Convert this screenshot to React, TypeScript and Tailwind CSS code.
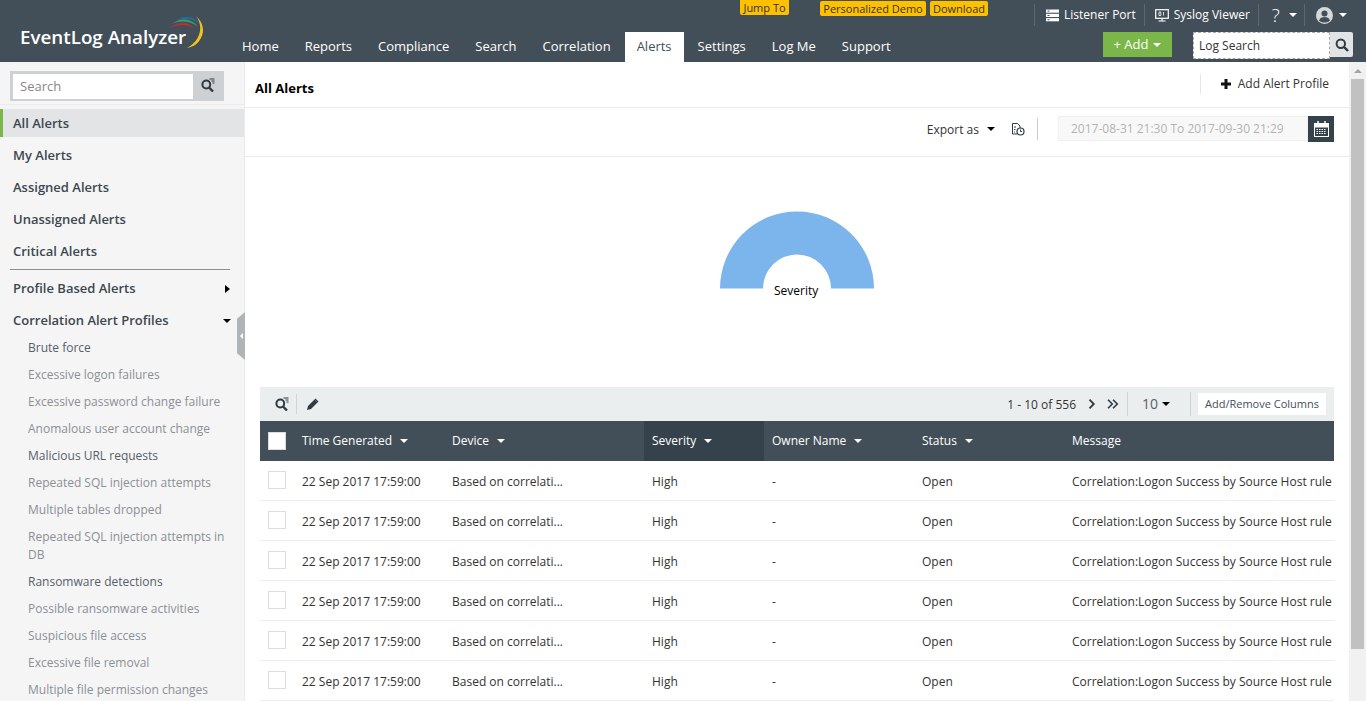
import React from 'react';

const navItems = ['Home', 'Reports', 'Compliance', 'Search', 'Correlation', 'Alerts', 'Settings', 'Log Me', 'Support'];
const topItems = ['All Alerts', 'My Alerts', 'Assigned Alerts', 'Unassigned Alerts', 'Critical Alerts'];
const subItems = [
  { label: 'Brute force', dark: true },
  { label: 'Excessive logon failures' },
  { label: 'Excessive password change failure' },
  { label: 'Anomalous user account change' },
  { label: 'Malicious URL requests', dark: true },
  { label: 'Repeated SQL injection attempts' },
  { label: 'Multiple tables dropped' },
  { label: 'Repeated SQL injection attempts in DB' },
  { label: 'Ransomware detections', dark: true },
  { label: 'Possible ransomware activities' },
  { label: 'Suspicious file access' },
  { label: 'Excessive file removal' },
  { label: 'Multiple file permission changes' },
];
const rows = [0, 1, 2, 3, 4, 5];

const Caret = ({ className = 'border-t-white' }: { className?: string }) => (
  <span className={`inline-block w-0 h-0 border-x-[4px] border-x-transparent border-t-[4px] ${className}`} />
);

const SearchFilterIcon = () => (
  <svg width="14" height="14" viewBox="0 0 14 14" fill="none">
    <circle cx="5.300" cy="6.500" r="3.900" stroke="#2f3a42" strokeWidth="2" />
    <path d="M8 9.500l4 4" stroke="#2f3a42" strokeWidth="2.400" />
    <path d="M8.500 1h5M10.500 3h3M11.500 5h2" stroke="#2f3a42" strokeWidth="1" />
  </svg>
);

const MagnifierIcon = () => (
  <svg width="14" height="14" viewBox="0 0 14 14" fill="none">
    <circle cx="5.800" cy="5.800" r="4.200" stroke="#2f3a42" strokeWidth="2" />
    <path d="M9 9l4 4" stroke="#2f3a42" strokeWidth="2.400" />
  </svg>
);

const Logo = () => (
  <div className="flex items-start w-[229px] shrink-0 pl-[20px] pt-[16px] relative">
    <span className="text-white text-[18.8px] font-semibold leading-[42px] whitespace-nowrap">EventLog Analyzer</span>
    <svg className="absolute left-[168px] top-[15px]" width="37" height="35" viewBox="0 0 37 35">
      <path d="M7 6C13 1 25 -1 33 10C26 3 15 2 7 6Z" fill="#1f6fb5" />
      <path d="M4 9C11 3 23 2 30 12C23 6 13 5 4 9Z" fill="#3aa655" />
      <path d="M2 13C9 7 20 6 26 13C19 9 10 9 2 13Z" fill="#c8283c" />
      <path d="M28 1C35 7 37 16 33 23C30 29 25 32 19 33C26 29 31 23 32 16C33 10 31 5 28 1Z" fill="#f2c21a" />
    </svg>
  </div>
);

const Header = () => (
  <header className="h-[62px] shrink-0 bg-[#434f58] flex text-white">
    <Logo />
    <div className="flex-1 flex flex-col min-w-0">
      <div className="h-[32px] flex items-start text-[11px] text-[#333]">
        <span className="ml-[511px] w-[49px] h-[15px] leading-[15px] rounded-b-[2px] bg-[#ffc000] text-center">Jump To</span>
        <span className="ml-[31px] mt-[1px] w-[106px] h-[15px] leading-[15px] rounded-[2px] bg-[#ffc000] text-center">Personalized Demo</span>
        <span className="ml-[4px] mt-[1px] w-[58px] h-[15px] leading-[15px] rounded-[2px] bg-[#ffc000] text-center">Download</span>
        <div className="ml-[46px] h-[22px] mt-[4px] flex items-center text-white text-[12px]">
          <div className="h-[22px] pl-[11px] pr-[8px] border-l border-[#5d6870] flex items-center gap-[5px]">
            <svg width="13" height="13" viewBox="0 0 13 13" fill="#fff">
              <rect x="0" y="0.500" width="13" height="3.200" />
              <rect x="0" y="4.800" width="13" height="3.200" />
              <rect x="0" y="9.100" width="13" height="3.200" />
              <path d="M1.500 1.600h2v1h-2zM1.500 5.900h2v1h-2zM1.500 10.200h2v1h-2z" fill="#434f58" />
            </svg>
            <span>Listener Port</span>
          </div>
          <div className="h-[22px] pl-[10px] pr-[8px] border-l border-[#5d6870] flex items-center gap-[5px]">
            <svg width="14" height="13" viewBox="0 0 14 13" fill="none">
              <rect x="0.700" y="0.700" width="12.600" height="8.600" stroke="#fff" strokeWidth="1.200" />
              <path d="M7 9.500v2M3.500 12h7" stroke="#fff" strokeWidth="1.200" />
              <path d="M4 3h1.800v3.500H4zM8.500 3v3.500" stroke="#fff" strokeWidth="0.800" />
            </svg>
            <span>Syslog Viewer</span>
          </div>
          <div className="h-[22px] pl-[13px] pr-[7px] border-l border-[#5d6870] flex items-center gap-[8px]">
            <span className="text-[19px] font-light leading-none w-[9px]">?</span>
            <Caret />
          </div>
          <div className="h-[22px] pl-[11px] border-l border-[#5d6870] flex items-center gap-[6px]">
            <svg width="17" height="17" viewBox="0 0 17 17">
              <circle cx="8.500" cy="8.500" r="8.500" fill="#d5d8da" />
              <circle cx="8.500" cy="6.500" r="3" fill="#434f58" />
              <path d="M3 13.500C4 10.500 6 10 8.500 10S13 10.500 14 13.500C12.500 15 10.500 15.500 8.500 15.500S4.500 15 3 13.500Z" fill="#434f58" />
            </svg>
            <Caret />
          </div>
        </div>
      </div>
      <div className="flex-1 flex items-end relative">
        <nav className="flex text-[13px] leading-[28px] h-[30px]">
          {navItems.map((item) =>
            item === 'Alerts' ? (
              <span key={item} className="mx-[1px] px-[12px] bg-white text-[#434f58]">{item}</span>
            ) : (
              <span key={item} className="px-[13px]">{item}</span>
            ),
          )}
        </nav>
        <div className="ml-auto mr-[13px] mb-[3px] flex items-start">
          <span className="w-[69px] h-[25px] bg-[#7ab648] flex items-center justify-center gap-[5px] text-[13px]">
            + Add <Caret />
          </span>
          <span className="ml-[21px] w-[137px] h-[27px] bg-white border border-dashed border-[#aaa] text-[12px] leading-[25px] pl-[5px] text-[#333]">Log Search</span>
          <span className="w-[23px] h-[25px] bg-[#e2e3e4] rounded-r-[2px] flex items-center justify-center">
            <MagnifierIcon />
          </span>
        </div>
      </div>
    </div>
  </header>
);

const Sidebar = () => (
  <aside className="w-[245px] shrink-0 bg-[#f5f5f5] border-r border-[#e8ecee] relative overflow-visible">
    <div className="h-[43px] mx-0 border-b border-[#e8ecee] pt-[9px] pl-[10px]">
      <div className="w-[214px] h-[30px] bg-[#cdd1d4] flex items-center pl-[3px]">
        <span className="w-[180px] h-[25px] bg-white text-[13px] leading-[25px] pl-[7px] text-[#888]">Search</span>
        <span className="flex-1 flex justify-center -mt-[2px] pr-[2px]"><SearchFilterIcon /></span>
      </div>
    </div>
    <div className="mt-[4px]">
      {topItems.map((item, i) => (
        <div
          key={item}
          className={`h-[28px] mb-[4px] flex items-center text-[13px] font-semibold text-[#3c4750] ${i === 0 ? 'bg-[#e3e4e6] border-l-[3px] border-[#7ab648] pl-[10px]' : 'pl-[13px]'}`}
        >
          <span className="mt-[2px]">{item}</span>
        </div>
      ))}
    </div>
    <div className="mx-[10px] w-[220px] mt-[3px] border-t border-[#8a8f93]" />
    <div className="mt-[5px] h-[28px] mb-[4px] pl-[13px] pr-[14px] flex items-center justify-between text-[13px] font-semibold text-[#3c4750]">
      <span>Profile Based Alerts</span>
      <span className="w-0 h-0 border-y-[4px] border-y-transparent border-l-[5px] border-l-black" />
    </div>
    <div className="h-[28px] pl-[13px] pr-[13px] flex items-center justify-between text-[13px] font-semibold text-[#3c4750]">
      <span>Correlation Alert Profiles</span>
      <Caret className="border-t-black" />
    </div>
    <ul className="pl-[28px] pr-[15px] mt-[4px]">
      {subItems.map((item) => (
        <li key={item.label} className={`text-[12px] leading-[18px] mb-[9px] ${item.dark ? 'text-[#55606a]' : 'text-[#8b9095]'}`}>
          {item.label}
        </li>
      ))}
    </ul>
    <div className="absolute right-[-1px] top-[250px] w-[8px] h-[48px] bg-[#b0b4b7] flex items-center justify-center [clip-path:polygon(0_14%,100%_0,100%_100%,0_86%)]">
      <span className="w-0 h-0 border-y-[3px] border-y-transparent border-r-[3px] border-r-white" />
    </div>
  </aside>
);

const Toolbar = () => (
  <div className="h-[34px] bg-[#ebeeef] flex items-center pl-[15px] pr-[8px] text-[#333]">
    <SearchFilterIcon />
    <span className="ml-[7px] h-[20px] border-l border-[#cfd3d5]" />
    <svg className="ml-[9px]" width="13" height="13" viewBox="0 0 13 13" fill="#2f3a42">
      <path d="M8.500 1.500l3 3L5 11 1 12l1-4z" />
      <path d="M9.500 0.500l3 3-1 1-3-3z" />
    </svg>
    <span className="ml-auto text-[12px] mt-[2px]">1 - 10 of 556</span>
    <svg className="ml-[12px]" width="8" height="10" viewBox="0 0 8 10" fill="none">
      <path d="M1.500 0.700l4.300 4.300-4.300 4.300" stroke="#2f3a42" strokeWidth="1.800" />
    </svg>
    <svg className="ml-[11px]" width="12" height="10" viewBox="0 0 12 10" fill="none">
      <path d="M1 0.700l4.300 4.300-4.300 4.300M6 0.700l4.300 4.300-4.300 4.300" stroke="#2f3a42" strokeWidth="1.600" />
    </svg>
    <span className="ml-[8px] h-[24px] border-l border-[#cfd3d5]" />
    <span className="ml-[14px] w-[14px] text-[14px] text-[#55606a] -mt-[1px]">10</span>
    <Caret className="border-t-black ml-[6px]" />
    <span className="ml-[20px] h-[24px] border-l border-[#cfd3d5]" />
    <span className="ml-[7px] h-[22px] w-[128px] bg-white text-[11px] leading-[22px] text-center text-[#434f58]">Add/Remove Columns</span>
  </div>
);

const HeadCell = ({ label, width, active, caret = true }: { label: string; width: string; active?: boolean; caret?: boolean }) => (
  <div className={`${width} shrink-0 h-full flex items-center gap-[8px] pl-[8px] ${active ? 'bg-[#35424b]' : ''}`}>
    <span>{label}</span>
    {caret && <Caret className="border-t-white" />}
  </div>
);

const AlertsTable = () => (
  <div className="mx-[15px] w-[1074px]">
    <Toolbar />
    <div className="h-[40px] bg-[#434f58] text-white text-[12px] flex items-center">
      <div className="w-[34px] shrink-0 pl-[8px]">
        <div className="w-[18px] h-[18px] bg-white border border-[#ddd]" />
      </div>
      <HeadCell label="Time Generated" width="w-[150px]" />
      <HeadCell label="Device" width="w-[200px]" />
      <HeadCell label="Severity" width="w-[120px]" active />
      <HeadCell label="Owner Name" width="w-[150px]" />
      <HeadCell label="Status" width="w-[150px]" />
      <HeadCell label="Message" width="flex-1" caret={false} />
    </div>
    {rows.map((row) => (
      <div key={row} className="h-[40px] border-b border-[#eceeef] pt-[2px] text-[12px] text-[#333] flex items-center overflow-hidden whitespace-nowrap">
        <div className="w-[34px] shrink-0 pl-[8px] pb-[4px]">
          <div className="w-[18px] h-[18px] bg-white border border-[#ddd]" />
        </div>
        <div className="w-[150px] shrink-0 pl-[8px]">22 Sep 2017 17:59:00</div>
        <div className="w-[200px] shrink-0 pl-[8px]">Based on correlati...</div>
        <div className="w-[120px] shrink-0 pl-[8px]">High</div>
        <div className="w-[150px] shrink-0 pl-[8px]">-</div>
        <div className="w-[150px] shrink-0 pl-[8px]">Open</div>
        <div className="flex-1 pl-[8px]">Correlation:Logon Success by Source Host rule</div>
      </div>
    ))}
  </div>
);

const Main = () => (
  <main className="flex-1 min-w-0 bg-white overflow-hidden">
    <div className="h-[46px] border-b border-[#e8ecee] flex items-center pl-[10px] pr-[20px]">
      <h1 className="text-[13px] font-bold text-black mt-[9px]">All Alerts</h1>
      <div className="ml-auto h-[20px] border-l border-[#e3e5e6] pl-[20px] flex items-center gap-[7px] text-[12px] text-[#333] -mt-[2px]">
        <svg width="10" height="10" viewBox="0 0 10 10" fill="#111">
          <path d="M3.500 0h3v3.500H10v3H6.500V10h-3V6.500H0v-3h3.500z" />
        </svg>
        <span>Add Alert Profile</span>
      </div>
    </div>
    <div className="h-[49px] border-b border-[#e8ecee] flex items-start pt-[8px] pr-[15px]">
      <div className="ml-auto h-[26px] flex items-center text-[12px] text-[#333]">
        <span className="mt-[1px]">Export as</span>
        <Caret className="border-t-black ml-[8px]" />
        <svg className="ml-[16px] mr-[1px]" width="14" height="14" viewBox="0 0 14 14" fill="none" stroke="#2f3a42">
          <path d="M6 12H1.500V1.500h5L9 4v2" strokeWidth="1" />
          <path d="M3 5h2M3 7.500h1.500M3 10h1" strokeWidth="1" />
          <circle cx="9.500" cy="9.500" r="3.500" strokeWidth="1.200" />
          <path d="M9.500 7.500v2h1.500" strokeWidth="1" />
        </svg>
        <span className="ml-[11px] h-[22px] border-l border-[#c9cccf]" />
        <span className="ml-[20px] w-[250px] h-[25px] self-start bg-[#f8f8f8] border border-[#f0f0f0] text-[#b3b3b3] leading-[23px] pl-[12px]">2017-08-31 21:30 To 2017-09-30 21:29</span>
        <span className="w-[26px] h-[26px] bg-[#35424b] flex items-center justify-center">
          <svg width="15" height="16" viewBox="0 0 15 16" fill="none" stroke="#fff">
            <rect x="0.500" y="2.500" width="14" height="13" strokeWidth="1" />
            <path d="M0.500 3.500h14v2.500h-14z" fill="#fff" strokeWidth="1" />
            <path d="M4 0v3.500M11 0v3.500" strokeWidth="1.500" />
            <path d="M2.500 8.500h10M2.500 10.500h10M2.500 12.500h10" strokeWidth="1.200" strokeDasharray="1.500 1" />
          </svg>
        </span>
      </div>
    </div>
    <div className="h-[230px] flex justify-center relative">
      <svg className="mt-[54px] -ml-[1px]" width="154" height="78" viewBox="0 0 154 78">
        <path d="M0 77.500A77 77 0 0 1 154 77.500H111A34 34 0 0 0 43 77.500Z" fill="#7cb5ec" />
      </svg>
      <span className="absolute left-[529px] top-[125px] text-[12px] text-black">Severity</span>
    </div>
    <AlertsTable />
  </main>
);

const Scrollbar = () => (
  <div className="w-[17px] shrink-0 bg-[#f1f1f1] flex flex-col">
    <div className="h-[17px] flex items-center justify-center">
      <span className="w-0 h-0 border-x-[4px] border-x-transparent border-b-[4px] border-b-[#a3a3a3]" />
    </div>
    <div className="h-[570px] mx-[2px] bg-[#c1c1c1]" />
  </div>
);

export default function App() {
  return (
    <div className="h-[701px] w-[1366px] overflow-hidden flex flex-col bg-white font-['Open_Sans',sans-serif]">
      <Header />
      <div className="flex-1 flex min-h-0 overflow-hidden">
        <Sidebar />
        <Main />
        <Scrollbar />
      </div>
    </div>
  );
}
